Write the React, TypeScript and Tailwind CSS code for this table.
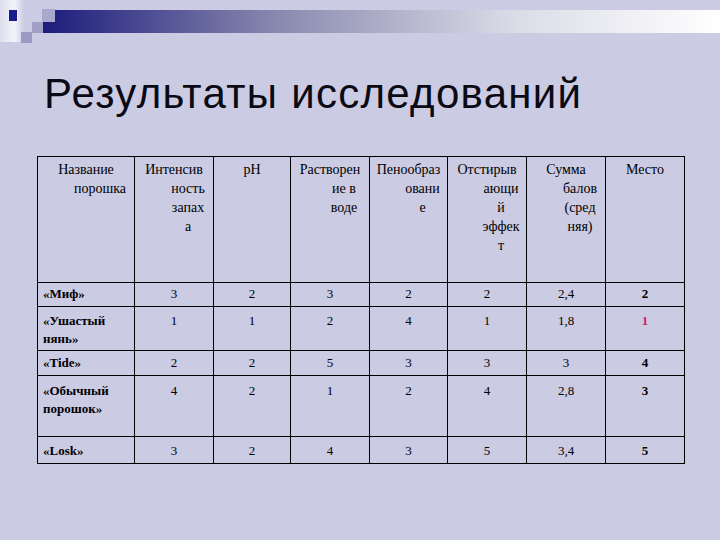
const HEADERS: { lines: string[] }[] = [
  { lines: ['Название', 'порошка'] },
  { lines: ['Интенсив', 'ность', 'запах', 'а'] },
  { lines: ['pH'] },
  { lines: ['Растворен', 'ие в', 'воде'] },
  { lines: ['Пенообраз', 'овани', 'е'] },
  { lines: ['Отстирыв', 'ающи', 'й', 'эффек', 'т'] },
  { lines: ['Сумма', 'балов', '(сред', 'няя)'] },
  { lines: ['Место'] },
]

const ROWS = [
  { name: ['«Миф»'], values: ['3', '2', '3', '2', '2', '2,4'], place: '2', h: 'h-[24px]', pt: 'pt-[2px]' },
  { name: ['«Ушастый', 'нянь»'], values: ['1', '1', '2', '4', '1', '1,8'], place: '1', h: 'h-[44px]', pt: 'pt-[5px]', best: true },
  { name: ['«Tide»'], values: ['2', '2', '5', '3', '3', '3'], place: '4', h: 'h-[25px]', pt: 'pt-[3px]' },
  { name: ['«Обычный', 'порошок»'], values: ['4', '2', '1', '2', '4', '2,8'], place: '3', h: 'h-[61px]', pt: 'pt-[6px]' },
  { name: ['«Losk»'], values: ['3', '2', '4', '3', '5', '3,4'], place: '5', h: 'h-[27px]', pt: 'pt-[5px]' },
]

const WIDTHS = ['w-[97px]', 'w-[79px]', 'w-[77px]', 'w-[79px]', 'w-[78px]', 'w-[79px]', 'w-[79px]', 'w-[79px]']

function Decoration() {
  return (
    <svg width="720" height="46" viewBox="0 0 720 46" className="block">
      <defs>
        <linearGradient id="bar" x1="0" x2="1" y1="0" y2="0">
          <stop offset="0" stopColor="#1c1c7c" />
          <stop offset="0.35" stopColor="#8a8ab0" />
          <stop offset="0.7" stopColor="#dcdce8" />
          <stop offset="1" stopColor="#ffffff" />
        </linearGradient>
        <linearGradient id="glow" x1="0" x2="1" y1="0" y2="0">
          <stop offset="0" stopColor="#dedeee" />
          <stop offset="0.6" stopColor="#f4f4fa" />
          <stop offset="1" stopColor="#cccce4" />
        </linearGradient>
      </defs>
      <rect x="0" y="0" width="24" height="42" fill="url(#glow)" />
      <rect x="8" y="9" width="10" height="13" fill="#f0f0f8" />
      <rect x="9" y="10" width="8" height="11" fill="#1a1a90" />
      <rect x="43" y="10" width="677" height="23" fill="url(#bar)" />
      <rect x="42" y="9" width="13" height="13" fill="#a9a9cf" />
      <rect x="32" y="22" width="11" height="11" fill="#9f9fc8" />
      <rect x="21" y="32" width="11" height="11" fill="#9a9ac2" />
    </svg>
  )
}

export default function App() {
  return (
    <div className="w-[720px] h-[540px] bg-[#cbcbe3] overflow-hidden text-black">
      <Decoration />
      <h1 className="mt-[27px] pl-[44px] text-[42px] leading-[42px] tracking-[1.3px] font-normal text-[#0a0a14] font-['Liberation_Sans',Arial,sans-serif]">
        Результаты исследований
      </h1>
      <div className="mt-[41px] pl-[37px]">
        <table className="table-fixed border-collapse w-[648px] font-['Liberation_Serif','Times_New_Roman',serif]">
          <colgroup>
            {WIDTHS.map((w, i) => (
              <col key={i} className={w} />
            ))}
          </colgroup>
          <thead>
            <tr className="h-[126px]">
              {HEADERS.map((h, i) => (
                <th
                  key={i}
                  className="border border-black align-top font-normal text-[14px] leading-[19px] text-center pt-[3px] pr-[4px] pl-[32px] indent-[-28px]"
                >
                  {h.lines.map((l, j) => (
                    <span key={j}>
                      {l}
                      {j < h.lines.length - 1 && <br />}
                    </span>
                  ))}
                </th>
              ))}
            </tr>
          </thead>
          <tbody>
            {ROWS.map((r, i) => (
              <tr key={i} className={r.h}>
                <td className={`border border-black align-top text-[13px] leading-[18px] font-bold pl-[5px] ${r.pt}`}>
                  {r.name.map((l, j) => (
                    <div key={j} className="whitespace-nowrap">{l}</div>
                  ))}
                </td>
                {r.values.map((v, j) => (
                  <td key={j} className={`border border-black align-top text-center text-[13px] leading-[18px] ${r.pt}`}>
                    {v}
                  </td>
                ))}
                <td
                  className={`border border-black align-top text-center text-[13px] leading-[18px] font-bold ${r.pt} ${
                    r.best ? 'text-[#d81b6a]' : ''
                  }`}
                >
                  {r.place}
                </td>
              </tr>
            ))}
          </tbody>
        </table>
      </div>
    </div>
  )
}
